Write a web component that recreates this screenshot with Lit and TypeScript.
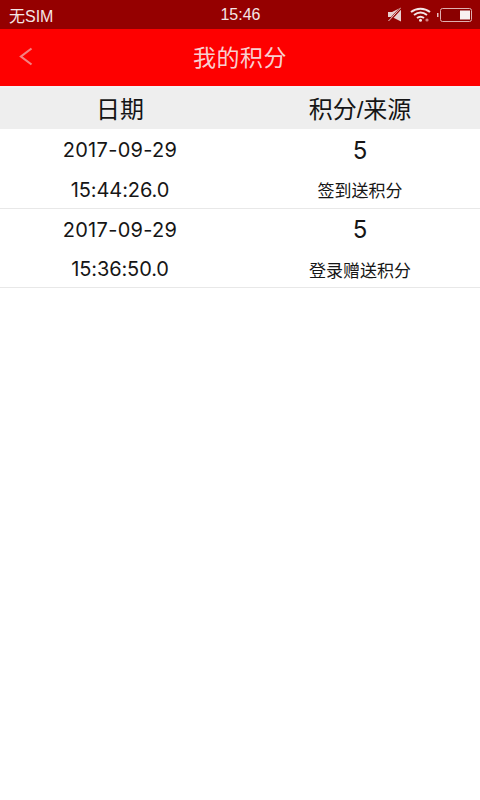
import { LitElement, html, css } from "lit";
import { customElement } from "lit/decorators.js";

const rows = [
  { date: "2017-09-29", time: "15:44:26.0", pts: "5", src: "签到送积分" },
  { date: "2017-09-29", time: "15:36:50.0", pts: "5", src: "登录赠送积分" },
];

@customElement("app-root")
export class AppRoot extends LitElement {
  static styles = css`
    :host {
      display: block;
      width: 480px;
      height: 800px;
      background: #fff;
      overflow: hidden;
      font-family: "Liberation Sans", "Noto Sans CJK SC", sans-serif;
      color: #1c1c1c;
    }
    .status {
      height: 29px;
      background: #950000;
      color: #f4e6e6;
      display: grid;
      grid-template-columns: 1fr auto 1fr;
      align-items: center;
      padding: 0 8px 0 9px;
      font-size: 16px;
    }
    .time { font-size: 16px; }
    .icons {
      display: flex;
      justify-content: flex-end;
      align-items: center;
      gap: 5px;
    }
    .mute { margin-right: 3px; }
    .bar {
      height: 57px;
      padding-bottom: 3px;
      box-sizing: border-box;
      background: #fe0000;
      position: relative;
      display: flex;
      align-items: center;
      justify-content: center;
      color: #f8d0d0;
      font-size: 23px;
      letter-spacing: 0.5px;
    }
    .back {
      position: absolute;
      left: 19px;
      top: 18px;
    }
    .line { height: 2px; background: #f4f0f4; }
    .head {
      height: 41px;
      padding-bottom: 3px;
      box-sizing: border-box;
      background: #eeeeee;
      display: grid;
      grid-template-columns: 1fr 1fr;
      align-items: center;
      text-align: center;
      font-size: 24px;
      color: #151515;
    }
    .row {
      display: grid;
      grid-template-columns: 1fr 1fr;
      grid-template-rows: 42px 37px;
      height: 79.5px;
      box-sizing: border-box;
      align-items: center;
      text-align: center;
      border-bottom: 1px solid #e8e8e8;
      font-size: 20px;
      font-family: "Inter", "Noto Sans CJK SC", sans-serif;
      font-weight: 400;
      color: #161616;
    }
    .row > div { white-space: nowrap; }
    .date { letter-spacing: 0.3px; }
    .clock { letter-spacing: -0.1px; }
    .pts { font-size: 24px; }
    .src {
      font-size: 17px;
      font-weight: 400;
      font-family: "Noto Sans CJK SC", sans-serif;
    }
  `;

  render() {
    return html`
      <div class="status">
        <span>无SIM</span>
        <span class="time">15:46</span>
        <div class="icons">
          <svg class="mute" width="15" height="15" viewBox="0 0 15 15">
            <path d="M1 5h4l9-4.500v14l-9-4.500H1z" fill="#e8d0d0" />
            <path d="M1 15L14 1" stroke="#950000" stroke-width="2.500" />
            <path d="M1.500 14L13.500 1" stroke="#e8d0d0" stroke-width="1" />
          </svg>
          <svg width="22" height="15" viewBox="0 0 22 15" fill="none" stroke="#f4e6e6" stroke-width="2">
            <path d="M1 5C6.500 0.500 14.500 0.500 20 5" />
            <path d="M4 8C8 5 13 5 17 8" />
            <path d="M7 11C9 9.500 12 9.500 14 11" />
            <circle cx="10.500" cy="13.300" r="1.500" fill="#f4e6e6" stroke="none" />
            <circle cx="17" cy="13" r="1.600" fill="#d88080" stroke="none" />
          </svg>
          <svg width="35" height="14" viewBox="0 0 35 14">
            <rect x="0" y="5" width="1.500" height="4" fill="#e8c0c0" />
            <rect x="3.500" y="0.500" width="31" height="13" rx="2" fill="#8a0000" stroke="#e0b0b0" />
            <rect x="23" y="2.500" width="10" height="9" fill="#f8f0f0" />
          </svg>
        </div>
      </div>
      <div class="bar">
        <svg class="back" width="14" height="19" viewBox="0 0 14 19" fill="none" stroke="#f48080" stroke-width="2.200">
          <path d="M12.500 1.500L2 9.500l10.500 8" />
        </svg>
        我的积分
      </div>
      <div class="line"></div>
      <div class="head">
        <div>日期</div>
        <div>积分/来源</div>
      </div>
      ${rows.map(
        (r) => html`
          <div class="row">
            <div class="date">${r.date}</div>
            <div class="pts">${r.pts}</div>
            <div class="clock">${r.time}</div>
            <div class="src">${r.src}</div>
          </div>
        `
      )}
    `;
  }
}
